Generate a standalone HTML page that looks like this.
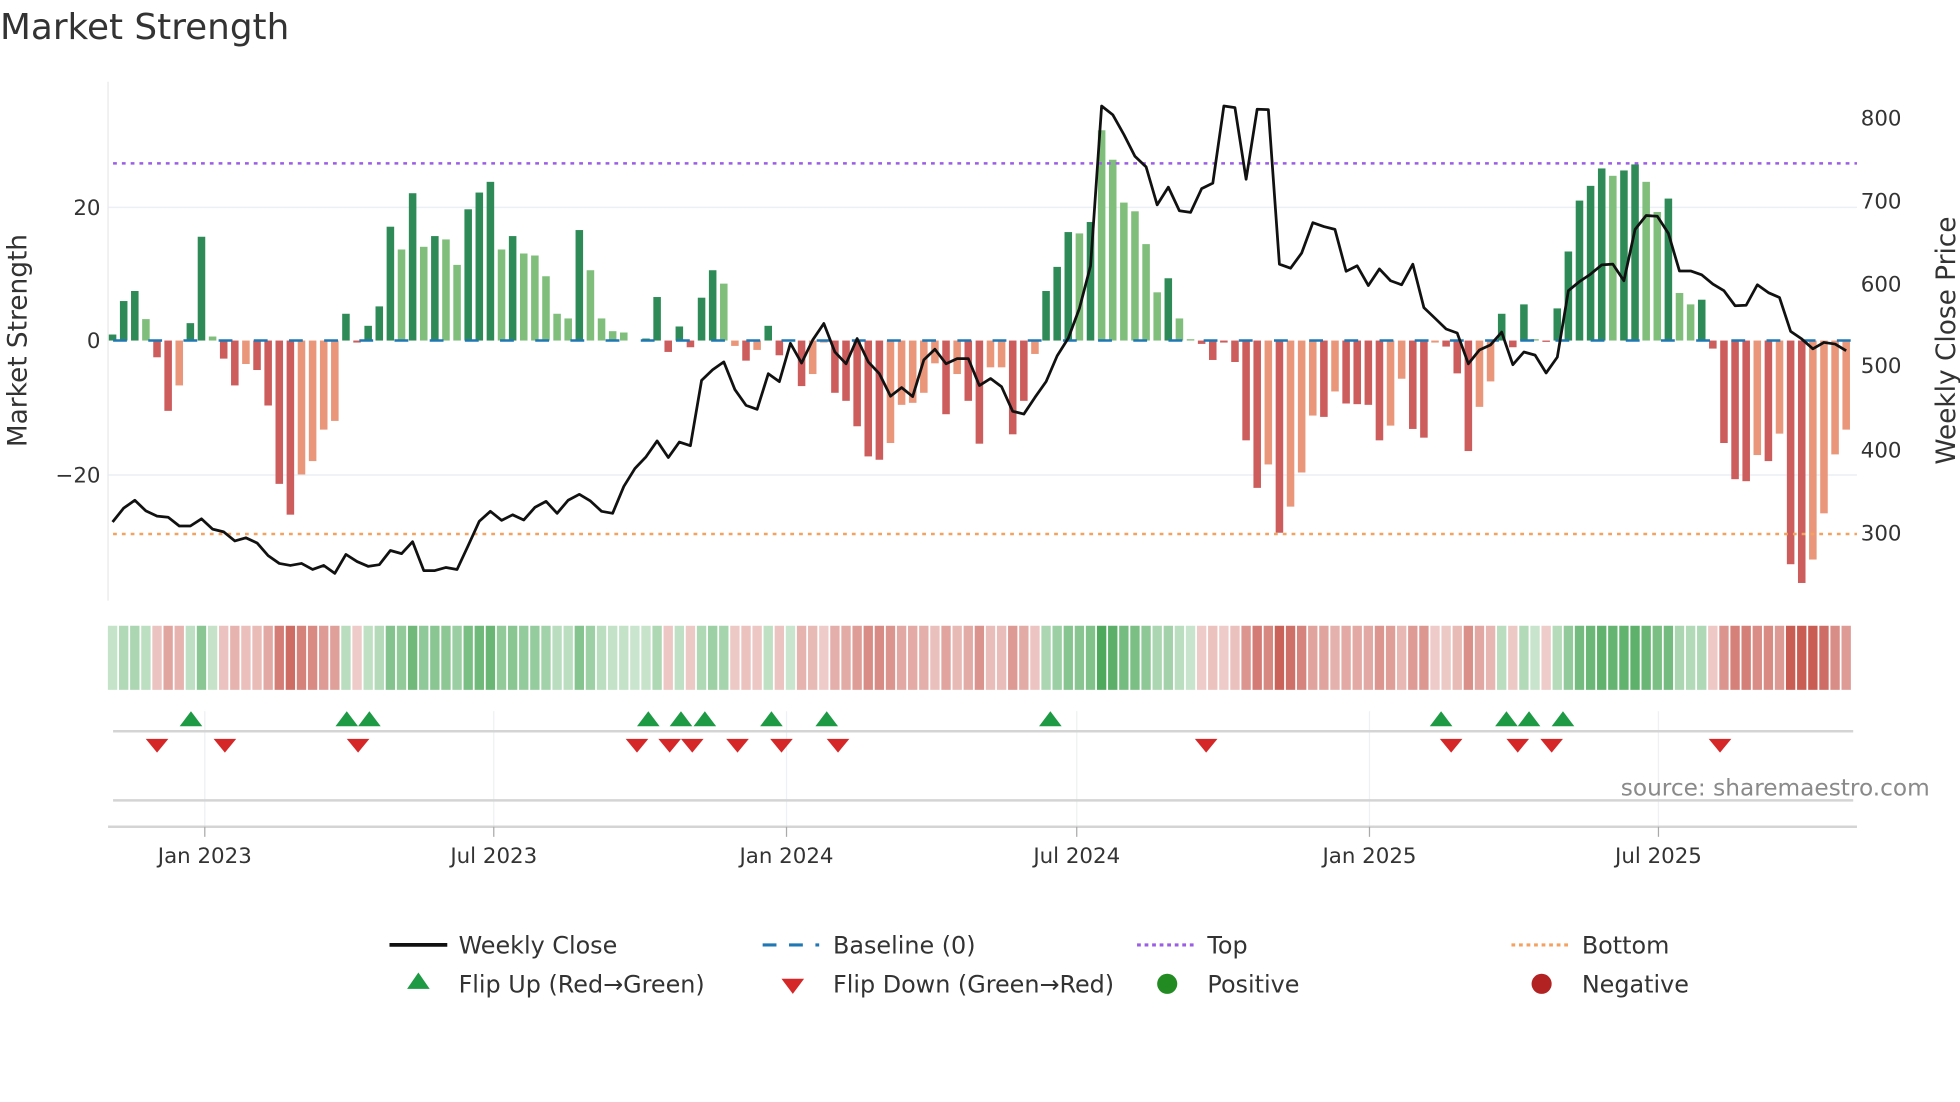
<!DOCTYPE html>
<html><head><meta charset="utf-8">
<style>
html,body{margin:0;padding:0;background:#fff;}
svg{display:block;font-family:"DejaVu Sans","Liberation Sans",sans-serif;}
</style></head>
<body>
<svg id="s" width="1960" height="1102" viewBox="0 0 1560 877" xmlns="http://www.w3.org/2000/svg">
<rect width="1560" height="877" fill="#fff"/>
<text x="0" y="31" font-size="28.5" fill="#333">Market Strength</text>
<line x1="86" y1="165" x2="1478" y2="165" stroke="#eceff4" stroke-width="1.2"/>
<line x1="86" y1="378" x2="1478" y2="378" stroke="#eceff4" stroke-width="1.2"/>
<line x1="86" y1="65" x2="86" y2="478" stroke="#e8e8e8" stroke-width="1"/>
<g id="bars"></g>
<g id="base"></g>
<line x1="90" y1="130" x2="1478" y2="130" stroke="#9b5de5" stroke-width="2" stroke-dasharray="3,4"/>
<line x1="90" y1="425" x2="1478" y2="425" stroke="#f4a261" stroke-width="2" stroke-dasharray="3,4"/>
<path id="price" fill="none" stroke="#111" stroke-width="2.2" stroke-linejoin="round"/>
<g font-size="17" fill="#333" text-anchor="end">
<text x="80" y="171">20</text><text x="80" y="277">0</text><text x="80" y="384">−20</text>
</g>
<g font-size="17" fill="#333">
<text x="1481" y="100">800</text><text x="1481" y="166">700</text><text x="1481" y="232">600</text>
<text x="1481" y="297">500</text><text x="1481" y="364">400</text><text x="1481" y="430">300</text>
</g>
<text transform="translate(21,271) rotate(-90)" font-size="21" fill="#333" text-anchor="middle">Market Strength</text>
<text transform="translate(1556,271) rotate(-90)" font-size="21" fill="#333" text-anchor="middle">Weekly Close Price</text>
<g id="heat"></g>
<g stroke="#eef0f3" stroke-width="1">
<line x1="163" y1="566" x2="163" y2="658"/><line x1="393" y1="566" x2="393" y2="658"/>
<line x1="626" y1="566" x2="626" y2="658"/><line x1="857" y1="566" x2="857" y2="658"/>
<line x1="1090" y1="566" x2="1090" y2="658"/><line x1="1320" y1="566" x2="1320" y2="658"/>
</g>
<line x1="90" y1="582" x2="1475" y2="582" stroke="#d4d4d4" stroke-width="2"/>
<line x1="90" y1="637" x2="1475" y2="637" stroke="#d4d4d4" stroke-width="2"/>
<line x1="86" y1="658" x2="1478" y2="658" stroke="#d4d4d4" stroke-width="2"/>
<g stroke="#aaa" stroke-width="1">
<line x1="163" y1="658" x2="163" y2="666"/><line x1="393" y1="658" x2="393" y2="666"/>
<line x1="626" y1="658" x2="626" y2="666"/><line x1="857" y1="658" x2="857" y2="666"/>
<line x1="1090" y1="658" x2="1090" y2="666"/><line x1="1320" y1="658" x2="1320" y2="666"/>
</g>
<g id="marks"></g>
<text x="1290" y="633" font-size="18.5" fill="#8a8a8a">source: sharemaestro.com</text>
<g font-size="17" fill="#333" text-anchor="middle">
<text x="163" y="687">Jan 2023</text><text x="393" y="687">Jul 2023</text><text x="626" y="687">Jan 2024</text>
<text x="857" y="687">Jul 2024</text><text x="1090" y="687">Jan 2025</text><text x="1320" y="687">Jul 2025</text>
</g>
<g font-size="19" fill="#333">
<line x1="310" y1="752" x2="356" y2="752" stroke="#111" stroke-width="3"/>
<text x="365" y="759">Weekly Close</text>
<line x1="607" y1="752" x2="652" y2="752" stroke="#1f77b4" stroke-width="2.5" stroke-dasharray="11,10"/>
<text x="663" y="759">Baseline (0)</text>
<line x1="905" y1="752" x2="950" y2="752" stroke="#9b5de5" stroke-width="2.5" stroke-dasharray="3,3"/>
<text x="961" y="759">Top</text>
<line x1="1203" y1="752" x2="1248" y2="752" stroke="#f4a261" stroke-width="2.5" stroke-dasharray="3,3"/>
<text x="1259" y="759">Bottom</text>
<polygon points="333,774 342,787 324,787" fill="#1e9a45"/>
<text x="365" y="790">Flip Up (Red→Green)</text>
<polygon points="622,779 640,779 631,791" fill="#d62728"/>
<text x="663" y="790">Flip Down (Green→Red)</text>
<circle cx="929" cy="783" r="8" fill="#228b22"/>
<text x="961" y="790">Positive</text>
<circle cx="1227" cy="783" r="8" fill="#b22222"/>
<text x="1259" y="790">Negative</text>
</g>
</svg>
<script>
var NS="http://www.w3.org/2000/svg";
function el(t,a,p){var e=document.createElementNS(NS,t);for(var k in a)e.setAttribute(k,a[k]);p.appendChild(e);return e;}
var B=[[0.9,1],[5.9,1],[7.4,1],[3.2,0],[-2.5,1],[-10.5,1],[-6.7,0],[2.6,1],[15.5,1],[0.6,0],
[-2.7,1],[-6.7,1],[-3.5,0],[-4.4,1],[-9.7,1],[-21.4,1],[-26,1],[-20,0],[-18,0],[-13.3,0],
[-12,0],[4,1],[-0.3,1],[2.2,1],[5.1,1],[17,1],[13.6,0],[22,1],[14,0],[15.6,1],
[15.1,0],[11.3,0],[19.6,1],[22.1,1],[23.7,1],[13.6,0],[15.6,1],[13,0],[12.7,0],[9.6,0],
[4,0],[3.3,0],[16.5,1],[10.5,0],[3.3,0],[1.4,0],[1.2,0],[0,0],[0.3,1],[6.5,1],
[-1.7,1],[2.1,1],[-1,1],[6.4,1],[10.5,1],[8.5,0],[-0.8,0],[-3,1],[-1.4,0],[2.2,1],
[-2.2,1],[0,0],[-6.8,1],[-5,0],[-0.3,0],[-7.8,1],[-9,1],[-12.8,1],[-17.3,1],[-17.8,1],
[-15.3,0],[-9.6,0],[-9.3,0],[-7.8,0],[-3.4,0],[-11,1],[-5,0],[-9,1],[-15.4,1],
[-4,0],[-4,0],[-14,1],[-9,1],[-2,0],[7.4,1],[11,1],[16.2,1],[16,0],[17.7,1],
[31.4,0],[27,0],[20.6,0],[19.3,0],[14.4,0],[7.2,0],[9.3,1],[3.3,0],[0.2,0],[-0.5,1],
[-2.9,1],[-0.3,1],[-3.2,1],[-14.9,1],[-22,1],[-18.5,0],[-28.7,1],[-24.8,0],[-19.7,0],[-11.2,0],
[-11.4,1],[-7.6,0],[-9.4,1],[-9.5,1],[-9.6,1],[-14.9,1],[-12.7,0],[-5.7,0],[-13.2,1],[-14.5,1],
[-0.3,0],[-0.9,1],[-4.9,1],[-16.5,1],[-9.9,0],[-6.1,0],[4,1],[-1,1],[5.4,1],[0.2,0],
[-0.2,1],[4.8,1],[13.3,1],[20.9,1],[23.1,1],[25.7,1],[24.6,0],[25.4,1],[26.3,1],[23.7,0],
[19.2,0],[21.2,1],[7.1,0],[5.4,0],[6.1,1],[-1.2,1],[-15.3,1],[-20.7,1],[-21,1],[-17.1,0],
[-18,1],[-13.9,0],[-33.4,1],[-36.2,1],[-32.7,0],[-25.8,0],[-17,0],[-13.3,0]];
var P1=[1320,1285,1265,1292,1305,1308,1330,1330,1312,1338,1345,1368,1360,1373,1405,1425,1430,1425,1440,1430,1450,1402,1420,1432,1428,1392,1400,1370,1443,1443,1435,1440,1380,1318,1293,1316,1302,1315,1283,1268,1298,1265,1250,1267,1293,1298,1230,1185,1155,1115,1157,1118,1127,962,935,915,985,1025,1035,945,965,868,918,860,818,890,920,856,915,945,1002,980,1003,910,883,920,907,907,975];
var P2=[957,978,1040,1047,1005,965,900,855,780,672,268,290,340,395,422,518,473,533,537,477,463,268,272,453,276,277,668,678,640,563,573,580,686,672,722,680,710,720,668,778,805,832,842,920,885,872,840,922,890,898,943,903,735,712,693,670,668,710,580,545,547,590,685,685,695,718,735,773,772,720,740,752,838,857,882,866,870,887];
var P=P1.concat(P2);
var x0=89.6,dx=8.845,zero=271,u=5.33;
var bars=document.getElementById("bars"),heat=document.getElementById("heat"),base=document.getElementById("base");
var n=B.length;
for(var i=0;i<n;i++){
 var v=B[i][0],d=B[i][1],x=x0+i*dx,h=Math.abs(v)*u;
 var c=v>=0?(d?"#2e8b57":"#7fbf7b"):(d?"#cd5c5c":"#e9967a");
 if(h>0.3)el("rect",{x:x-3,y:v>=0?zero-h:zero,width:6,height:h,fill:c},bars);
 var a=Math.min(1,Math.abs(v)/30);a=0.28+0.62*a;
 var hc=v>=0?"rgba(60,160,75,"+a+")":"rgba(195,75,65,"+a+")";
 el("rect",{x:x-dx/2+0.7,y:498,width:dx-1.4,height:51,fill:hc},heat);
}
el("line",{x1:90,y1:zero,x2:1478,y2:zero,stroke:"#1f77b4","stroke-width":2,"stroke-dasharray":"11,17"},base);
var dstr="";
for(var i=0;i<P.length&&i<n;i++){var x=x0+i*dx,y=P[i]*0.3147;dstr+=(i?"L":"M")+x.toFixed(1)+","+y.toFixed(1);}
document.getElementById("price").setAttribute("d",dstr);
var m=document.getElementById("marks");
[152,276,294,516,542,561,614,658,836,1147,1199,1217,1244].forEach(function(x){
 el("polygon",{points:x+",566 "+(x+9)+",578 "+(x-9)+",578",fill:"#1e9a45"},m);});
[125,179,285,507,533,551,587,622,667,960,1155,1208,1235,1369].forEach(function(x){
 el("polygon",{points:(x-9)+",588 "+(x+9)+",588 "+x+",599",fill:"#d62728"},m);});
</script>
</body></html>
